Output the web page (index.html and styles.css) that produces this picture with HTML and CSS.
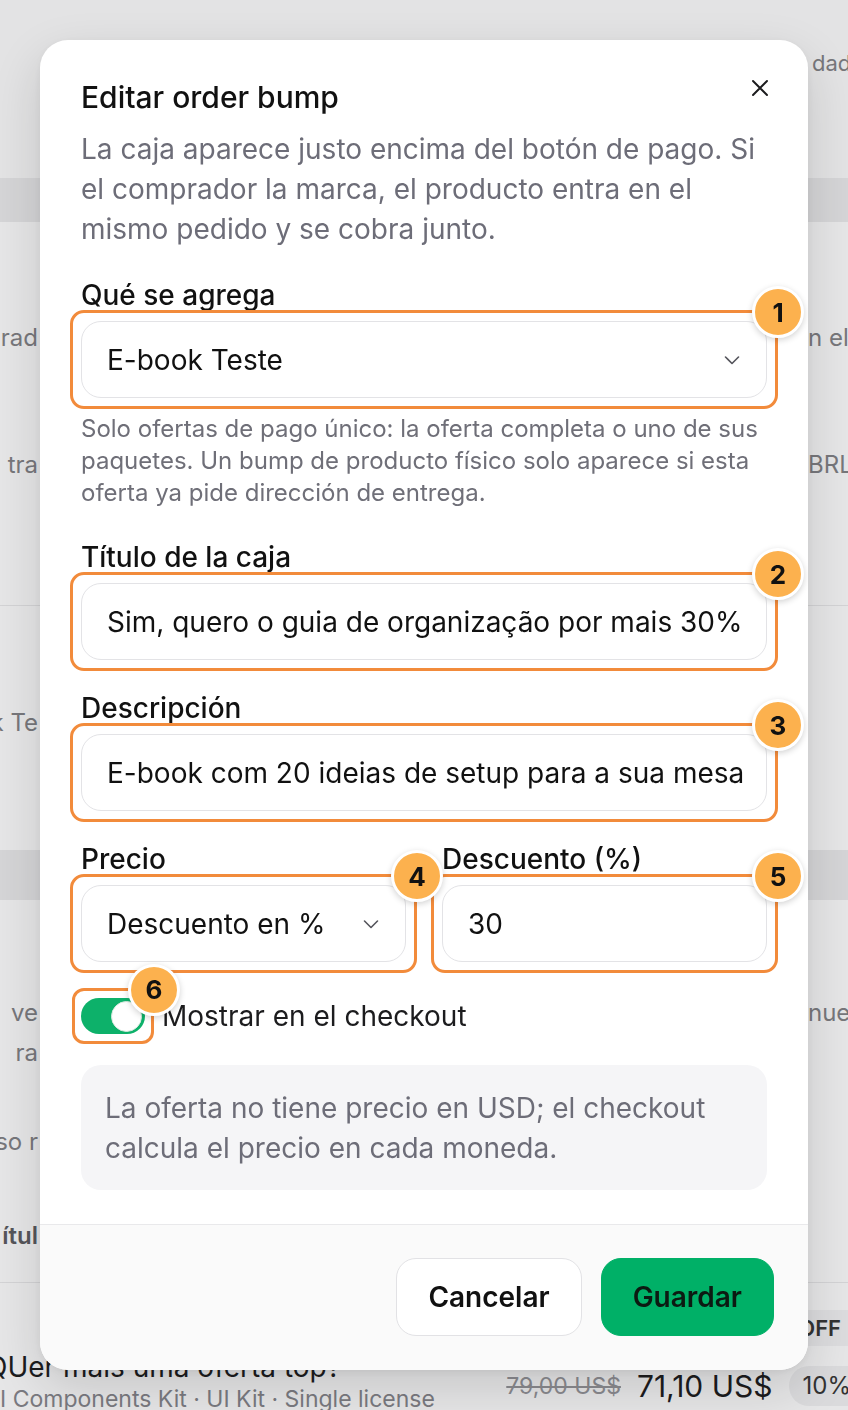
FILE: index.html
```html
<!DOCTYPE html>
<html lang="es">
<head>
  <meta charset="UTF-8">
  <title>Editar order bump</title>
  <link rel="stylesheet" href="styles.css">
</head>
<body>
  <div class="page">
    <div class="bg-top">
      <span class="frag-l"></span><span></span><span class="frag-r">dad</span>
    </div>
    <div class="bg-band"></div>
    <div class="bg-section sec-a">
      <div class="bg-row"><span class="frag-l">rad</span><span></span><span class="frag-r">n el</span></div>
      <div class="bg-row row-gap-a"><span class="frag-l">tra</span><span></span><span class="frag-r">BRL</span></div>
    </div>
    <div class="bg-section sec-b">
      <div class="bg-row"><span class="frag-l">k Te</span><span></span><span class="frag-r"></span></div>
    </div>
    <div class="bg-band band-b"></div>
    <div class="bg-section sec-c">
      <div class="bg-row"><span class="frag-l">ve</span><span></span><span class="frag-r">nue</span></div>
      <div class="bg-row row-gap-b"><span class="frag-l">ra</span><span></span><span></span></div>
      <div class="bg-row row-gap-c"><span class="frag-l">so r</span><span></span><span></span></div>
      <div class="bg-row row-gap-d"><span class="frag-l strong">ítul</span><span></span><span></span></div>
    </div>
    <div class="bg-product">
      <div class="product-info">
        <div class="product-name">QUer mais uma oferta top?</div>
        <div class="product-meta">UI Components Kit · UI Kit · Single license</div>
      </div>
      <div class="product-price">
        <span class="off">OFF</span>
        <div class="price-line">
          <s>79,00 US$</s>
          <span class="price-now">71,10 US$</span>
          <span class="pct">10%</span>
        </div>
      </div>
    </div>
  </div>

  <div class="overlay">
    <div class="modal">
      <div class="modal-body">
        <div class="modal-head">
          <h2>Editar order bump</h2>
          <button class="close" aria-label="Cerrar">
            <svg width="22" height="22" viewBox="0 0 22 22"><path d="M4 4l14 14M18 4L4 18" stroke="#1c1c1e" stroke-width="2" stroke-linecap="round"/></svg>
          </button>
        </div>
        <p class="lead">La caja aparece justo encima del botón de pago. Si el comprador la marca, el producto entra en el mismo pedido y se cobra junto.</p>

        <div class="field">
          <label>Qué se agrega</label>
          <div class="mark">
            <div class="select">
              <select><option>E-book Teste</option></select>
              <svg width="20" height="20" viewBox="0 0 20 20"><path d="M3.5 7l6.5 6.5L16.5 7" fill="none" stroke="#55555c" stroke-width="1.6" stroke-linecap="round" stroke-linejoin="round"/></svg>
            </div>
            <span class="pin">1</span>
          </div>
          <p class="hint">Solo ofertas de pago único: la oferta completa o uno de sus paquetes. Un bump de producto físico solo aparece si esta oferta ya pide dirección de entrega.</p>
        </div>

        <div class="field">
          <label>Título de la caja</label>
          <div class="mark">
            <input type="text" value="Sim, quero o guia de organização por mais 30%">
            <span class="pin">2</span>
          </div>
        </div>

        <div class="field">
          <label>Descripción</label>
          <div class="mark">
            <input type="text" value="E-book com 20 ideias de setup para a sua mesa">
            <span class="pin">3</span>
          </div>
        </div>

        <div class="field two-col">
          <div>
            <label>Precio</label>
            <div class="mark">
              <div class="select">
                <select><option>Descuento en %</option></select>
                <svg width="20" height="20" viewBox="0 0 20 20"><path d="M3.5 7l6.5 6.5L16.5 7" fill="none" stroke="#55555c" stroke-width="1.6" stroke-linecap="round" stroke-linejoin="round"/></svg>
              </div>
              <span class="pin">4</span>
            </div>
          </div>
          <div>
            <label>Descuento (%)</label>
            <div class="mark">
              <input type="text" value="30">
              <span class="pin">5</span>
            </div>
          </div>
        </div>

        <div class="toggle-row">
          <div class="mark mark-switch">
            <span class="switch"><span class="knob"></span></span>
            <span class="pin">6</span>
          </div>
          <span class="toggle-label">Mostrar en el checkout</span>
        </div>

        <div class="note">La oferta no tiene precio en USD; el checkout calcula el precio en cada moneda.</div>
      </div>

      <div class="modal-foot">
        <button class="btn">Cancelar</button>
        <button class="btn btn-primary">Guardar</button>
      </div>
    </div>
  </div>
</body>
</html>
```

FILE: styles.css
```css
* {
  box-sizing: border-box;
}

body {
  margin: 0;
  font-family: 'Inter', 'Liberation Sans', sans-serif;
  background: #e5e5e6;
  color: #111;
  overflow: hidden;
}

.page {
  height: 1410px;
  overflow: hidden;
  font-size: 24px;
  line-height: 32px;
  color: #77777b;
}

.bg-row,
.bg-top {
  display: grid;
  grid-template-columns: 40px 1fr 40px;
}

.frag-l {
  display: flex;
  justify-content: flex-end;
  overflow: hidden;
  white-space: nowrap;
  padding-right: 2px;
}

.frag-r {
  overflow: hidden;
  white-space: nowrap;
}

.strong {
  font-weight: 600;
  color: #55555a;
}

.bg-top {
  height: 178px;
  padding-top: 47px;
  align-items: start;
  background: #e3e3e4;
}

.bg-top .frag-r {
  padding-left: 4px;
  font-size: 22px;
}

.bg-band {
  height: 44px;
  background: #d5d5d7;
}

.band-b {
  height: 50px;
}

.bg-section {
  background: #e6e6e7;
  border-bottom: 1px solid #d3d3d5;
}

.sec-a {
  height: 384px;
  padding-top: 100px;
}

.row-gap-a {
  margin-top: 95px;
}

.sec-b {
  height: 244px;
  padding-top: 101px;
  border-bottom: 0;
}

.sec-c {
  height: 383px;
  padding-top: 97px;
}

.row-gap-b {
  margin-top: 8px;
}

.row-gap-c {
  margin-top: 57px;
}

.row-gap-d {
  margin-top: 62px;
}

.bg-product {
  display: flex;
  justify-content: space-between;
  align-items: flex-end;
  background: #e6e6e7;
  height: 127px;
}

.product-info {
  margin-left: -14px;
  white-space: nowrap;
}

.product-name {
  font-size: 28px;
  line-height: 34px;
  color: #1c1c1e;
}

.product-meta {
  font-size: 23px;
  line-height: 30px;
  color: #7a7a80;
  margin-bottom: -4px;
  margin-left: -3px;
}

.product-price {
  display: flex;
  flex-direction: column;
  align-items: flex-end;
  white-space: nowrap;
  margin-right: -43px;
}

.off {
  background: #dcdcde;
  color: #333;
  font-size: 22px;
  font-weight: 600;
  padding: 2px 50px 2px 14px;
  border-radius: 8px;
  margin-bottom: 20px;
}

.price-line {
  display: flex;
  align-items: center;
  gap: 16px;
  margin-bottom: 4px;
}

.price-line s {
  font-size: 23px;
  color: #8a8a8f;
}

.price-now {
  font-size: 30px;
  color: #1c1c1e;
}

.pct {
  background: #dadadc;
  border-radius: 20px;
  padding: 4px 40px 4px 14px;
  color: #333;
}

/* overlay y modal */
.overlay {
  position: fixed;
  inset: 0;
  padding: 40px;
  z-index: 10;
}

.modal {
  width: 768px;
  background: #fff;
  border-radius: 28px;
  box-shadow: 0 18px 50px rgba(0, 0, 0, 0.14), 0 2px 8px rgba(0, 0, 0, 0.06);
  overflow: hidden;
}

.modal-body {
  padding: 40px 41px 34px;
}

.modal-head {
  display: flex;
  justify-content: space-between;
  align-items: flex-start;
}

.modal-head h2 {
  margin: 0;
  font-size: 30px;
  line-height: 34px;
  font-weight: 500;
  color: #111;
}

.close {
  width: 32px;
  height: 32px;
  margin: -8px -9px 0 0;
  padding: 0;
  border: 0;
  background: none;
  display: grid;
  place-items: center;
}

.lead {
  margin: 15px 0 0;
  font-size: 28px;
  line-height: 40px;
  color: #6d6d78;
}

.field {
  margin-top: 30px;
}

.field + .field {
  margin-top: 32px;
}

.field label {
  display: block;
  font-size: 28px;
  line-height: 32px;
  font-weight: 500;
  color: #111;
  margin-bottom: 10px;
}

.mark {
  position: relative;
  margin: -11px;
  padding: 8px;
  border: 3px solid #f28b3b;
  border-radius: 14px;
  background: #fff;
}

.pin {
  position: absolute;
  top: -27px;
  right: -29px;
  width: 52px;
  height: 52px;
  border-radius: 50%;
  border: 3px solid #fff;
  background: #fcb14e;
  box-shadow: 0 2px 6px rgba(0, 0, 0, 0.18);
  display: grid;
  place-items: center;
  font-size: 26px;
  font-weight: 700;
  color: #111;
  z-index: 2;
}

.mark input,
.mark select {
  display: block;
  width: 100%;
  height: 77px;
  padding: 0 10px 0 25px;
  border: 1px solid #e3e3e6;
  border-radius: 20px;
  background: #fff;
  font-family: inherit;
  font-size: 28px;
  color: #111;
  outline: none;
}

.select {
  position: relative;
}

.mark select {
  appearance: none;
  -webkit-appearance: none;
}

.select svg {
  position: absolute;
  right: 25px;
  top: 50%;
  margin-top: -10px;
}

.hint {
  margin: 15px 0 0;
  font-size: 24px;
  line-height: 32px;
  color: #6f6f78;
}

.two-col {
  display: grid;
  grid-template-columns: 1fr 1fr;
  column-gap: 36px;
}

.toggle-row {
  display: flex;
  align-items: center;
  gap: 17px;
  margin-top: 36px;
}

.mark-switch {
  margin: -10px -9px;
  padding: 7px 6px;
  border-radius: 12px;
  line-height: 0;
}

.switch {
  display: inline-flex;
  justify-content: flex-end;
  align-items: center;
  width: 64px;
  height: 36px;
  padding: 3px;
  border-radius: 18px;
  background: #0db16a;
}

.knob {
  width: 31px;
  height: 31px;
  border-radius: 50%;
  background: #fff;
  border: 1px solid #d9e9df;
}

.toggle-label {
  font-size: 28px;
  line-height: 32px;
  color: #1c1c1e;
}

.note {
  margin-top: 31px;
  padding: 23px 24px 22px;
  background: #f5f5f7;
  border-radius: 20px;
  font-size: 28px;
  line-height: 40px;
  color: #6d6d78;
}

.modal-foot {
  display: flex;
  justify-content: flex-end;
  gap: 19px;
  padding: 33px 34px 34px;
  border-top: 1px solid #e9e9eb;
  background: #fafafa;
}

.btn {
  height: 78px;
  padding: 0 31px;
  border: 1px solid #e2e2e5;
  border-radius: 20px;
  background: #fff;
  font-family: inherit;
  font-size: 28px;
  font-weight: 600;
  color: #111;
}

.btn-primary {
  background: #00b067;
  border-color: #00b067;
  color: #0c1a12;
}
```
